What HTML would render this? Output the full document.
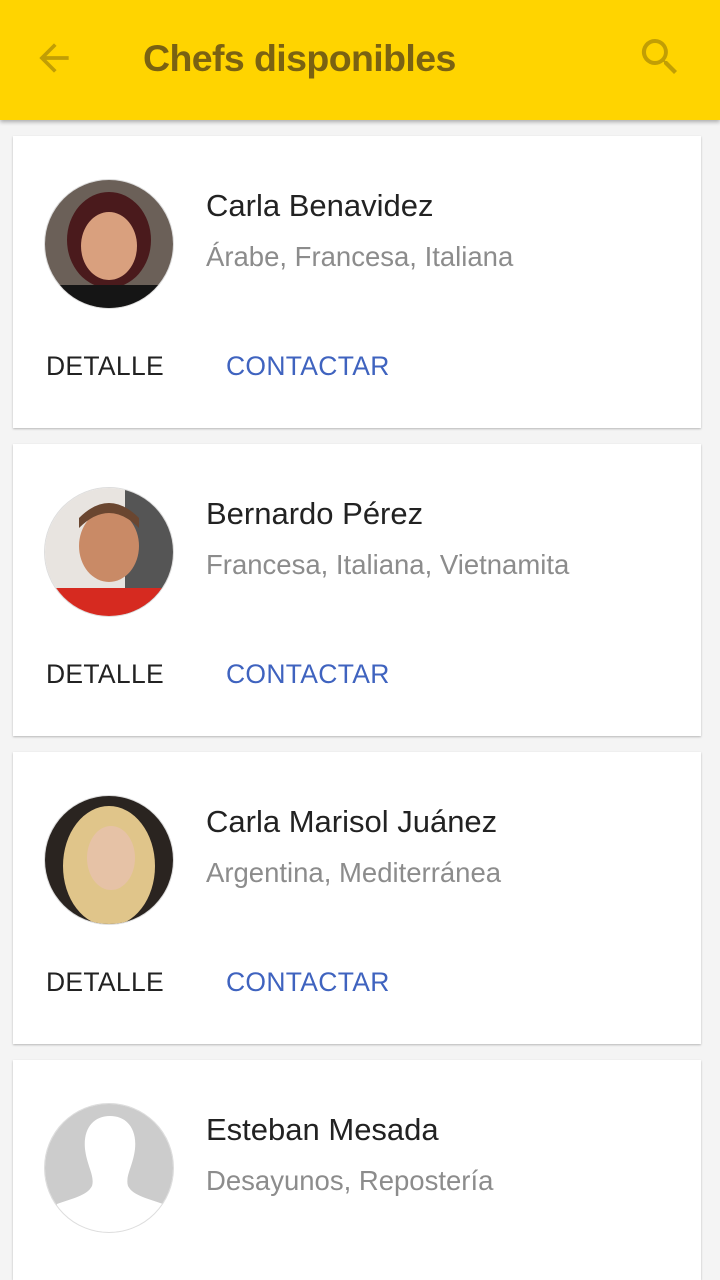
<!DOCTYPE html>
<html><head><meta charset="utf-8"><style>
*{margin:0;padding:0;box-sizing:border-box}
html,body{width:720px;height:1280px;overflow:hidden}
body{background:#f4f4f4;font-family:"Liberation Sans",sans-serif;position:relative}
.hdr{position:absolute;left:0;top:0;width:720px;height:120px;background:#ffd400;box-shadow:0 2px 4px rgba(0,0,0,.3);z-index:2}
.hdr .t{position:absolute;left:143px;top:37px;font-size:37.5px;font-weight:bold;color:#7a6212;letter-spacing:-0.6px}
.card{position:absolute;left:13px;width:688px;height:292px;background:#fff;box-shadow:0 1px 2px rgba(0,0,0,.25)}
.av{position:absolute;left:31px;top:43px;width:130px;height:130px;border-radius:50%;overflow:hidden;border:1px solid #ddd}
.nm{position:absolute;left:193px;top:52px;font-size:31px;color:#222}
.sb{position:absolute;left:193px;top:105px;font-size:27.5px;color:#8c8c8c}
.b1{position:absolute;left:33px;top:215px;font-size:26.5px;color:#222;letter-spacing:0.3px}
.b2{position:absolute;left:213px;top:215px;font-size:26.5px;color:#3f63bf;letter-spacing:0.3px}
</style></head><body>
<div class="hdr">
<svg style="position:absolute;left:32px;top:36px" width="44" height="44" viewBox="0 0 24 24"><path d="M20 11H7.8l5.6-5.6L12 4l-8 8 8 8 1.4-1.4L7.8 13H20z" fill="#c19e05"/></svg>
<div class="t">Chefs disponibles</div>
<svg style="position:absolute;left:636px;top:33px" width="48" height="48" viewBox="0 0 24 24"><path d="M15.5 14h-.8l-.3-.3A6.5 6.5 0 1 0 9.5 16a6.5 6.5 0 0 0 4.2-1.6l.3.3v.8l5 5 1.5-1.5-5-5zm-6 0a4.5 4.5 0 1 1 0-9 4.5 4.5 0 0 1 0 9z" fill="#c19e05"/></svg>
</div>

<div class="card" style="top:136px">
<div class="av"><svg width="130" height="130" viewBox="0 0 130 130"><rect width="130" height="130" fill="#6b6058"/><ellipse cx="64" cy="60" rx="42" ry="48" fill="#4a1a1c"/><ellipse cx="64" cy="66" rx="28" ry="34" fill="#d9a07e"/><rect x="0" y="105" width="130" height="30" fill="#151515"/></svg></div>
<div class="nm">Carla Benavidez</div><div class="sb">Árabe, Francesa, Italiana</div>
<div class="b1">DETALLE</div><div class="b2">CONTACTAR</div></div>

<div class="card" style="top:444px">
<div class="av"><svg width="130" height="130" viewBox="0 0 130 130"><rect width="130" height="130" fill="#e8e4e0"/><rect x="80" width="50" height="130" fill="#555"/><ellipse cx="64" cy="58" rx="30" ry="36" fill="#c98a66"/><path d="M34 40Q64 10 94 40L94 30Q64 0 34 30Z" fill="#6a4630"/><rect x="0" y="100" width="130" height="30" fill="#d62a20"/></svg></div>
<div class="nm">Bernardo Pérez</div><div class="sb">Francesa, Italiana, Vietnamita</div>
<div class="b1">DETALLE</div><div class="b2">CONTACTAR</div></div>

<div class="card" style="top:752px">
<div class="av"><svg width="130" height="130" viewBox="0 0 130 130"><rect width="130" height="130" fill="#2a2420"/><ellipse cx="64" cy="70" rx="46" ry="60" fill="#e0c58a"/><ellipse cx="66" cy="62" rx="24" ry="32" fill="#e6c2a6"/></svg></div>
<div class="nm">Carla Marisol Juánez</div><div class="sb">Argentina, Mediterránea</div>
<div class="b1">DETALLE</div><div class="b2">CONTACTAR</div></div>

<div class="card" style="top:1060px;height:220px">
<div class="av"><svg width="130" height="130" viewBox="0 0 130 130"><rect width="130" height="130" fill="#cccccc"/><path d="M65 12C48 12 38 25 40 45C42 62 50 72 47 82C42 92 25 95 12 100L12 130L118 130L118 100C105 95 88 92 83 82C80 72 88 62 90 45C92 25 82 12 65 12Z" fill="#fff"/></svg></div>
<div class="nm">Esteban Mesada</div><div class="sb">Desayunos, Repostería</div></div>
</body></html>
